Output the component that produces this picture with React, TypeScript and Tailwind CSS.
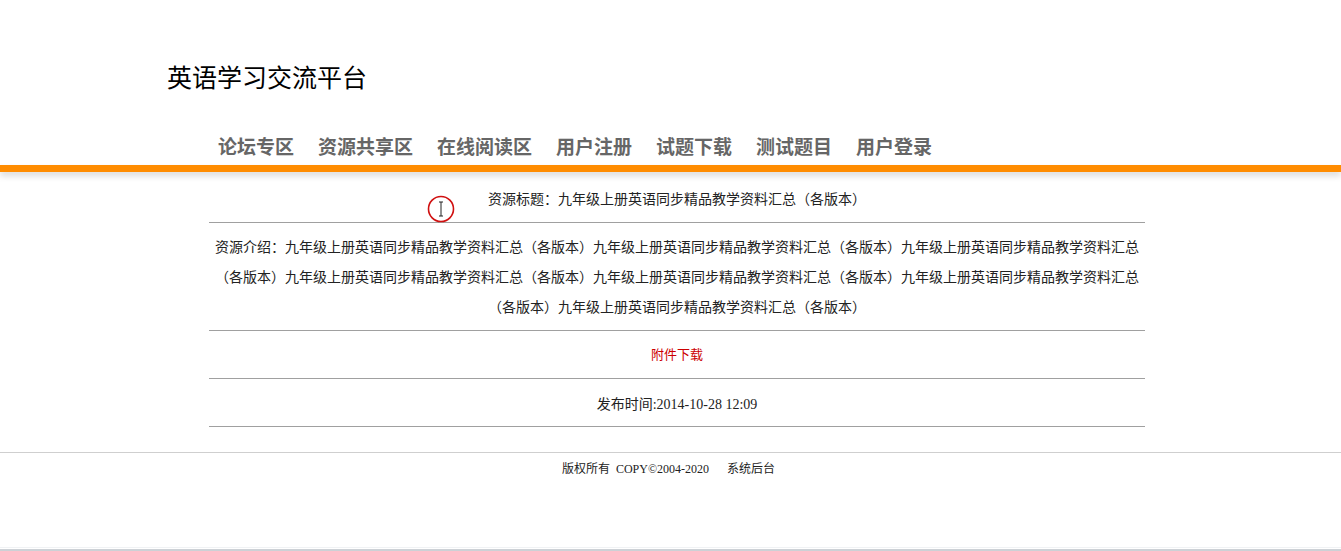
import React from 'react';

const navItems = ['论坛专区', '资源共享区', '在线阅读区', '用户注册', '试题下载', '测试题目', '用户登录'];

const block = '九年级上册英语同步精品教学资料汇总（各版本）';

export default function App() {
  const intro = '资源介绍：' + block.repeat(7);

  return (
    <div
      className="relative h-[551px] flex flex-col bg-white text-[#222] overflow-hidden"
      style={{ fontFamily: '"Liberation Serif", "Noto Sans CJK SC", serif' }}
    >
      {/* header */}
      <div className="h-[165px] flex flex-col">
        <div
          className="pl-[167px] pt-[59px] text-[25px] leading-[34px] text-black"
          style={{ fontFamily: '"Noto Sans CJK SC", sans-serif' }}
        >
          英语学习交流平台
        </div>
        <nav className="mt-auto pl-[206px] pb-[4px] flex">
          {navItems.map((item) => (
            <a
              key={item}
              className="px-[12px] text-[19px] leading-[30px] font-bold text-[#666]"
              style={{ fontFamily: '"Noto Sans CJK SC", sans-serif' }}
            >
              {item}
            </a>
          ))}
        </nav>
      </div>
      <div className="h-[7px] bg-[#ff8c00] shadow-[0_4px_6px_rgba(0,0,0,0.15)]" />

      {/* detail */}
      <div
        className="ml-[209px] w-[936px] text-center text-[14px]"
        style={{ fontFamily: '"Liberation Serif", "Noto Sans CJK SC", serif' }}
      >
        <div className="pt-[16px] pb-[12px] leading-[20px] border-b border-[#a0a0a0]">
          <span style={{ fontFamily: '"Noto Sans CJK SC", sans-serif' }}>
            资源标题：九年级上册英语同步精品教学资料汇总（各版本）
          </span>
        </div>
        <div
          className="pt-[8px] pb-[9px] leading-[30px] border-b border-[#a0a0a0]"
          style={{ fontFamily: '"Noto Sans CJK SC", sans-serif' }}
        >
          {intro}
        </div>
        <div className="h-[48px] pb-[1px] flex items-center justify-center border-b border-[#a0a0a0]">
          <a className="text-[13px] text-[#cc0000]" style={{ fontFamily: '"Noto Sans CJK SC", sans-serif' }}>
            附件下载
          </a>
        </div>
        <div className="h-[48px] pt-[3px] flex items-center justify-center border-b border-[#a0a0a0]">
          发布时间:2014-10-28 12:09
        </div>
      </div>

      {/* footer */}
      <div className="mt-[25px] border-t border-[#cfcfcf] pt-[7px] text-center text-[12px] leading-[18px] text-[#222]">
        <span className="-ml-[4px]">版权所有&nbsp;&nbsp;COPY©2004-2020</span>
        <span className="ml-[18px]">系统后台</span>
      </div>

      <div className="mt-auto h-[4px] border-t border-[#f0f2f4] border-b-2 border-b-[#cdd1d6]" />

      {/* cursor highlight */}
      <svg className="absolute left-[427px] top-[195px]" width="28" height="28" viewBox="0 0 28 28">
        <circle cx="14" cy="14" r="12.5" fill="none" stroke="#d01010" strokeWidth="1.6" />
        <path d="M12 7h4M14 7v14M12 21h4" stroke="#222" strokeWidth="1" fill="none" />
      </svg>
    </div>
  );
}
